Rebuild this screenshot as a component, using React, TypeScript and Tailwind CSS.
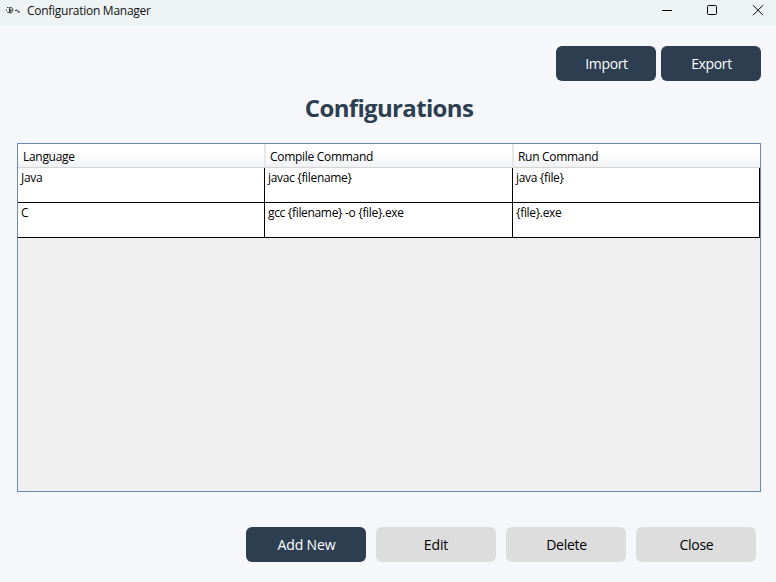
import React from "react";

type Config = { language: string; compile: string; run: string };

const configs: Config[] = [
  { language: "Java", compile: "javac {filename}", run: "java {file}" },
  { language: "C", compile: "gcc {filename} -o {file}.exe", run: "{file}.exe" },
];

function TitleBar() {
  return (
    <header className="flex h-[26px] shrink-0 items-start bg-[#eef4f4] pl-[6px]">
      <svg className="mt-[6px] h-[10px] w-[15px]" viewBox="0 0 15 10" fill="none" stroke="#222">
        <path d="M2.5 1.5H1M0.5 3.5v1.5M1.2 6.5H3" strokeWidth="0.8" />
        <path d="M3.5 1.5h2l1.2 1.2v2.5L5 7H3.5z" strokeWidth="0.8" />
        <path d="M3 4.2h2.5M4.8 2.5v4" strokeWidth="0.8" />
        <path d="M9 5l1-.8h1.5l1 1.3M11.5 6H14" strokeWidth="1" />
      </svg>
      <span className="ml-[6px] mt-[3px] text-[12px] leading-4 tracking-[-0.27px] text-[#111]">Configuration Manager</span>
      <svg className="ml-auto mr-[12px] mt-[4px] h-[12px] w-[103px]" viewBox="0 0 103 12" fill="none" stroke="#000">
        <path d="M1 6.5H11" />
        <rect x="46.5" y="1.5" width="9" height="9" rx="1" />
        <path d="M92 1.2l10 10M102 1.2l-10 10" />
      </svg>
    </header>
  );
}

function Button({ label, className }: { label: string; className: string }) {
  return (
    <button className={`flex h-[35px] items-center justify-center rounded-[6px] text-[14px] leading-5 ${className}`}>
      {label}
    </button>
  );
}

function HeaderCell({ label, className = "" }: { label: string; className?: string }) {
  return (
    <div className={`flex h-[23px] items-center pt-[3px] text-[12px] leading-4 tracking-[-0.3px] ${className}`}>
      {label}
    </div>
  );
}

function Cell({ text }: { text: string }) {
  return (
    <div className="h-[35px] border-r border-b border-black bg-white pt-[2px] pl-[3px] text-[12px] leading-4 tracking-[-0.33px]">
      {text}
    </div>
  );
}

export default function App() {
  return (
    <div className="flex h-[582px] w-[776px] flex-col overflow-hidden bg-[#f5f7fb] font-['Open_Sans','Noto_Sans',sans-serif] text-black">
      <TitleBar />
      <div className="mt-[20px] flex justify-end gap-[5px] pr-[15px]">
        <Button label="Import" className="w-[100px] bg-[#2c3e50] pl-px tracking-[-0.35px] text-white" />
        <Button label="Export" className="w-[100px] bg-[#2c3e50] pl-px tracking-[-0.35px] text-white" />
      </div>
      <h1 className="mt-[11px] pl-[2px] text-center text-[24px] leading-8 font-bold tracking-[-0.66px] text-[#2c3e50]">
        Configurations
      </h1>
      <main className="mt-[19px] ml-[17px] h-[349px] w-[744px] shrink-0 border border-[#688caf] bg-[#f0f0f0]">
        <div className="grid grid-cols-[246px_248px_248px] border-b border-[#d5d5d5] bg-linear-to-b from-white from-40% to-[#f1f2f4]">
          <HeaderCell label="Language" className="pl-[5px]" />
          <HeaderCell label="Compile Command" className="border-l-2 border-[#e6e8ea] pl-[4px]" />
          <HeaderCell label="Run Command" className="border-l-2 border-[#e6e8ea] pl-[4px]" />
        </div>
        {configs.map((c) => (
          <div key={c.language} className="grid grid-cols-[247px_248px_247px]">
            <Cell text={c.language} />
            <Cell text={c.compile} />
            <Cell text={c.run} />
          </div>
        ))}
      </main>
      <div className="mt-[35px] flex justify-end gap-[10px] pr-[20px]">
        <Button label="Add New" className="w-[120px] bg-[#2c3e50] pl-px tracking-[-0.15px] text-white" />
        <Button label="Edit" className="w-[120px] bg-[#dddddd] tracking-[-0.1px]" />
        <Button label="Delete" className="w-[120px] bg-[#dddddd] pl-px tracking-[-0.3px]" />
        <Button label="Close" className="w-[120px] bg-[#dddddd] pl-px tracking-[-0.3px]" />
      </div>
    </div>
  );
}
